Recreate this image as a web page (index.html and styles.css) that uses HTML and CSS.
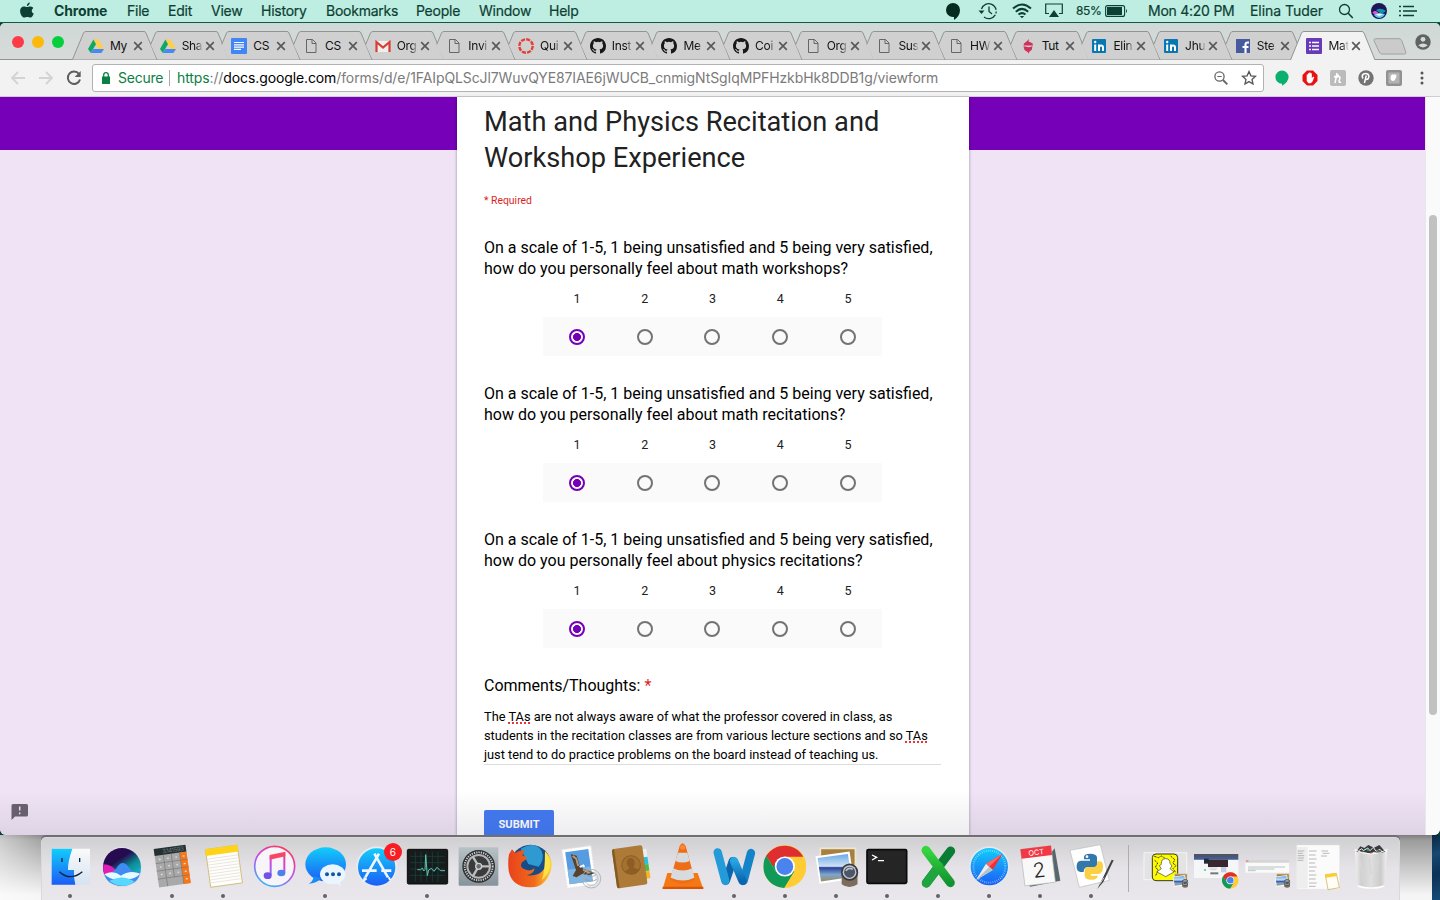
FILE: index.html
```html
<!DOCTYPE html>
<html lang="en">
<head>
<meta charset="utf-8">
<title>Math and Physics Recitation and Workshop Experience</title>
<link rel="stylesheet" href="styles.css">
</head>
<body>
<svg class="defs" width="0" height="0">
  <defs>
    <linearGradient id="blue" x1="0" y1="0" x2="0" y2="1"><stop offset="0" stop-color="#12cdfb"/><stop offset="1" stop-color="#1c5df5"/></linearGradient>
    <linearGradient id="pale" x1="0" y1="0" x2="0" y2="1"><stop offset="0" stop-color="#fafafa"/><stop offset="1" stop-color="#d6e3f2"/></linearGradient>
    <linearGradient id="tunes" gradientUnits="userSpaceOnUse" x1="110" y1="28" x2="50" y2="148"><stop offset="0" stop-color="#fb3b5c"/><stop offset=".5" stop-color="#c44be8"/><stop offset="1" stop-color="#30b8fa"/></linearGradient>
    <linearGradient id="steel" x1="0" y1="0" x2="0" y2="1"><stop offset="0" stop-color="#b7c2c7"/><stop offset="1" stop-color="#87939a"/></linearGradient>
    <linearGradient id="fox" x1="0" y1="0" x2="1" y2="0"><stop offset="0" stop-color="#e8421c"/><stop offset=".6" stop-color="#f26a1b"/><stop offset="1" stop-color="#fdd53b"/></linearGradient>
    <linearGradient id="word" x1="0" y1="0" x2="0" y2="1"><stop offset="0" stop-color="#27a4e2"/><stop offset="1" stop-color="#0a64ae"/></linearGradient>
    <linearGradient id="excel" x1="0" y1="0" x2="0" y2="1"><stop offset="0" stop-color="#35d540"/><stop offset="1" stop-color="#12932f"/></linearGradient>
    <linearGradient id="sea" x1="0" y1="0" x2="0" y2="1"><stop offset="0" stop-color="#6aa8e8"/><stop offset=".45" stop-color="#cfe2f3"/><stop offset=".5" stop-color="#2b3f9a"/><stop offset=".75" stop-color="#7aa7cf"/><stop offset="1" stop-color="#a08a60"/></linearGradient>
    <linearGradient id="siribg" x1="0" y1="0" x2=".7" y2="1"><stop offset="0" stop-color="#2b0750"/><stop offset=".4" stop-color="#240c50"/><stop offset=".65" stop-color="#0c8d94"/><stop offset="1" stop-color="#1fc0e0"/></linearGradient>
    <linearGradient id="bin" x1="0" y1="0" x2="1" y2="0"><stop offset="0" stop-color="#f3f3f3"/><stop offset=".2" stop-color="#cfcfcf"/><stop offset=".5" stop-color="#dfdfdf"/><stop offset=".8" stop-color="#cbcbcb"/><stop offset="1" stop-color="#f3f3f3"/></linearGradient>
    <symbol id="close" viewBox="0 0 10 10"><path d="M1.2 1.2l7.6 7.6M8.8 1.2L1.2 8.8" stroke="#5a5a5a" stroke-width="1.7" fill="none"/></symbol>
    <symbol id="tab" viewBox="0 0 86 29"><path d="M6.7 13.5L12 2Q12.600 .5 14 .5H72Q73.400 .5 74 2L85 28.500H13.500Z" fill="#d0d0d0"/><path d="M6.700 13.500L11.500 2Q12.200 .5 14 .5H72Q73.400 .5 74 2L85 28.500" fill="none" stroke="#929494"/></symbol>
    <symbol id="tabfirst" viewBox="0 0 86 29"><path d="M.5 28.500L11.500 2Q12.200 .5 14 .5H72Q73.400 .5 74 2L85 28.500" fill="#d0d0d0" stroke="#929494"/></symbol>
    <symbol id="tabactive" viewBox="0 0 86 29"><path d="M.5 29L11.500 2Q12.200 .5 14 .5H72Q73.400 .5 74 2L85 29" fill="#f2f2f2" stroke="#929494"/></symbol>
    <symbol id="drive" viewBox="0 0 16 16"><path d="M5.400 1.500h5.200L16 11h-5.400z" fill="#ffcf48"/><path d="M5.400 1.500L8 6.200 2.800 15 0 11z" fill="#11a861"/><path d="M5.400 11H16l-2.600 4H2.800z" fill="#4688f4"/></symbol>
    <symbol id="doc" viewBox="0 0 16 16"><rect width="16" height="16" rx="1" fill="#4285f4"/><path d="M3 4.500h10M3 6.800h10M3 9.100h10M3 11.400h7" stroke="#fff" stroke-width="1.200"/></symbol>
    <symbol id="page" viewBox="0 0 16 16"><path d="M3.500 1.500h6l3.500 3.500v9.500h-9.500zM9 1.500v4h4" fill="none" stroke="#666"/></symbol>
    <symbol id="mail" viewBox="0 0 16 16"><path d="M1 3h14v11H1z" fill="#eee"/><path d="M1.500 14V4L8 9.500 14.500 4v10" fill="none" stroke="#d93c32" stroke-width="2.200"/></symbol>
    <symbol id="canvas" viewBox="0 0 16 16"><circle cx="8" cy="8" r="6.700" fill="none" stroke="#e23f35" stroke-width="2.400" stroke-dasharray="4.100 1.160"/></symbol>
    <symbol id="github" viewBox="0 0 16 16"><path fill="#191717" d="M8 0C3.580 0 0 3.580 0 8c0 3.540 2.290 6.530 5.470 7.590.4.070.55-.17.55-.38 0-.19-.01-.82-.01-1.490-2.010.37-2.530-.49-2.690-.94-.09-.23-.48-.94-.82-1.130-.28-.15-.68-.52-.01-.53.63-.01 1.080.58 1.230.82.72 1.210 1.870.87 2.330.66.070-.52.28-.87.51-1.070-1.780-.2-3.640-.89-3.640-3.950 0-.87.31-1.590.82-2.150-.08-.2-.36-1.020.08-2.120 0 0 .67-.21 2.200.82a7.600 7.600 0 0 1 4 0c1.530-1.040 2.200-.82 2.200-.82.44 1.100.16 1.920.08 2.120.51.56.82 1.270.82 2.150 0 3.070-1.870 3.750-3.650 3.950.29.25.54.73.54 1.480 0 1.070-.01 1.930-.01 2.200 0 .21.15.46.55.38A8 8 0 0 0 16 8c0-4.420-3.580-8-8-8z"/></symbol>
    <symbol id="acorn" viewBox="0 0 16 16"><path d="M6.500 3.500L9 1l-.5 2.500 4 1.700.5 2.300H3.500L4 5.500zM3.500 8.300L9 9.200l3.500-1-.7 3.500-2.500 2L9 15.500 7.500 14 4.500 12z" fill="#cf315b"/></symbol>
    <symbol id="linkedin" viewBox="0 0 16 16"><rect x="1" y="1" width="14" height="14" rx="1" fill="#0976b4"/><path d="M4.200 6.500V13M8 13V6.500M8 9.500q0-2 2-2t2 2V13" stroke="#fff" stroke-width="2" fill="none"/><circle cx="4.200" cy="4" r="1.200" fill="#fff"/></symbol>
    <symbol id="facebook" viewBox="0 0 16 16"><rect x="1" y="1" width="14" height="14" rx=".5" fill="#465b9e"/><path d="M10.500 15V6.500q0-2 2-2H14M7.500 9h6" stroke="#fff" stroke-width="2.100" fill="none"/></symbol>
    <symbol id="forms" viewBox="0 0 16 16"><rect width="16" height="16" rx="1" fill="#673ab7"/><path d="M6 4.500h7M6 8h7M6 11.500h7M3 4.500h2M3 8h2M3 11.500h2" stroke="#fff" stroke-width="1.700"/></symbol>
    <symbol id="chrome" viewBox="0 0 128 128"><circle cx="64" cy="64" r="64" fill="#fc3"/><path d="M9 31A64 64 0 0 0 62 128L92 79 64 64 36 80Z" fill="#119957"/><path d="M9 31L36 80 64 64V32Z" fill="#119957"/><path d="M9 32A64 64 0 0 1 119 35H64Q44 36 36 54L30 64Z" fill="#e02d2f"/><circle cx="64" cy="64" r="30" fill="#fff"/><circle cx="64" cy="64" r="25" fill="#4a82ee"/></symbol>
    <symbol id="preview" viewBox="0 0 130 120"><path d="M18 4h102v80H18z" fill="#a7803f" stroke="#efe6d0" stroke-width="5"/><path d="M4 27L103 13l12 80-99 14z" fill="#fff"/><path d="M10 32l88-12 10 67-88 13z" fill="url(#sea)"/><path d="M80 78v30q22 16 46 0V78z" fill="#7c6c5d"/><circle cx="103" cy="73" r="25" fill="#393b40"/><circle cx="103" cy="73" r="20" fill="#c2c8ce"/><circle cx="103" cy="73" r="16" fill="#4c5666"/><path d="M92 69q9-12 20-4" stroke="#bac6d7" stroke-width="5" fill="none"/></symbol>
  </defs>
</svg>

<div class="screen">
  <header class="menubar">
    <svg class="apple" width="14" height="17" viewBox="0 0 14 17"><path d="M9.700.3Q10 3 6.900 4.200 6.700 1.500 9.700.3zM7 5.100c1.500 0 2-.8 3.600-.7 1.300.1 2.200.7 2.800 1.500-2.400 1.500-2 4.700.4 5.700-.7 2-1.900 4-3.300 4-1.200 0-1.700-.7-3.200-.7s-2 .7-3.100.7C2.300 15.600.1 12 .1 9c0-3 1.800-4.600 3.800-4.600C5.200 4.400 6 5.100 7 5.100z" fill="#0d3f34"/></svg>
    <nav class="menus"><b>Chrome</b><span>File</span><span>Edit</span><span>View</span><span>History</span><span>Bookmarks</span><span>People</span><span>Window</span><span>Help</span></nav>
    <div class="status">
      <svg width="16" height="18" viewBox="0 0 16 18"><path d="M8 1a7 7 0 1 0 0 14h1v3q6-4 6-10a7 7 0 0 0-7-7z" fill="#062c22"/></svg>
      <svg width="20" height="18" viewBox="0 0 20 18"><path d="M3.500 7A7.500 7.500 0 1 1 6 15" fill="none" stroke="#0d4034" stroke-width="1.300" stroke-dasharray="20 1.500 2 1.500"/><path d="M.5 8.500h6L3.500 12z" fill="#0d4034"/><path d="M11 4.500V9.500l3 2.500" fill="none" stroke="#0d4034" stroke-width="1.300"/></svg>
      <svg width="20" height="16" viewBox="0 0 20 16"><path d="M1 5.500q9-8 18 0M3.800 8.700q6.200-5.600 12.400 0M6.500 11.600q3.500-3 7 0" fill="none" stroke="#0d4034" stroke-width="2"/><path d="M7.800 12.900h4.400L10 15.300z" fill="#0d4034"/></svg>
      <svg width="18" height="15" viewBox="0 0 18 15"><path d="M4 10.500H.7V1h16.600v9.500H14" fill="none" stroke="#0d4034" stroke-width="1.200"/><path d="M9 7l5 7H4z" fill="#0d4034"/></svg>
      <span class="percent">85%</span>
      <svg width="23" height="12" viewBox="0 0 23 12"><rect x=".6" y=".6" width="19" height="10.800" rx="2" fill="none" stroke="#0d4034" stroke-width="1.100"/><rect x="2" y="2" width="15" height="8" fill="#0d4034"/><path d="M21 4q2 2 0 4z" fill="#0d4034"/></svg>
      <span class="clock">Mon 4:20 PM</span><span class="user">Elina Tuder</span>
      <svg width="16" height="16" viewBox="0 0 16 16"><circle cx="6.500" cy="6.500" r="5" fill="none" stroke="#0d4034" stroke-width="1.300"/><path d="M10.200 10.200l4.600 4.800" stroke="#0d4034" stroke-width="1.600"/></svg>
      <svg width="16" height="16" viewBox="0 0 16 16"><circle cx="8" cy="8" r="8" fill="#1e1458"/><path d="M5 7q5-3 10 1-3 3-6 2z" fill="#1590a8"/><path d="M1.500 9.500q3-3 6 .5l-3 3z" fill="#d856d9"/><path d="M3 12q4-3 11-1-2 4-6 4-3 0-5-3z" fill="#5ecdf2"/><path d="M5 11.500q3-2 7 0l-4 1.500z" fill="#e6fbff"/></svg>
      <svg width="19" height="12" viewBox="0 0 19 12"><path d="M4 1.500h11M4 6h14M4 10.500h11M0 1.500h2M0 6h2M0 10.500h2" stroke="#0d4034" stroke-width="1.700"/></svg>
    </div>
  </header>

  <main class="window">
    <div class="tabstrip">
      <div class="lights"><i class="red"></i><i class="amber"></i><i class="green"></i></div>
      <div class="tabs">
        <div class="tab"><svg class="shape"><use href="#tabfirst"/></svg><svg class="fav"><use href="#drive"/></svg><span>My</span><svg class="x"><use href="#close"/></svg></div>
        <div class="tab"><svg class="shape"><use href="#tab"/></svg><svg class="fav"><use href="#drive"/></svg><span>Sha</span><svg class="x"><use href="#close"/></svg></div>
        <div class="tab"><svg class="shape"><use href="#tab"/></svg><svg class="fav"><use href="#doc"/></svg><span>CS</span><svg class="x"><use href="#close"/></svg></div>
        <div class="tab"><svg class="shape"><use href="#tab"/></svg><svg class="fav"><use href="#page"/></svg><span>CS</span><svg class="x"><use href="#close"/></svg></div>
        <div class="tab"><svg class="shape"><use href="#tab"/></svg><svg class="fav"><use href="#mail"/></svg><span>Org</span><svg class="x"><use href="#close"/></svg></div>
        <div class="tab"><svg class="shape"><use href="#tab"/></svg><svg class="fav"><use href="#page"/></svg><span>Invi</span><svg class="x"><use href="#close"/></svg></div>
        <div class="tab"><svg class="shape"><use href="#tab"/></svg><svg class="fav"><use href="#canvas"/></svg><span>Qui</span><svg class="x"><use href="#close"/></svg></div>
        <div class="tab"><svg class="shape"><use href="#tab"/></svg><svg class="fav"><use href="#github"/></svg><span>Inst</span><svg class="x"><use href="#close"/></svg></div>
        <div class="tab"><svg class="shape"><use href="#tab"/></svg><svg class="fav"><use href="#github"/></svg><span>Me</span><svg class="x"><use href="#close"/></svg></div>
        <div class="tab"><svg class="shape"><use href="#tab"/></svg><svg class="fav"><use href="#github"/></svg><span>Coi</span><svg class="x"><use href="#close"/></svg></div>
        <div class="tab"><svg class="shape"><use href="#tab"/></svg><svg class="fav"><use href="#page"/></svg><span>Org</span><svg class="x"><use href="#close"/></svg></div>
        <div class="tab"><svg class="shape"><use href="#tab"/></svg><svg class="fav"><use href="#page"/></svg><span>Sus</span><svg class="x"><use href="#close"/></svg></div>
        <div class="tab"><svg class="shape"><use href="#tab"/></svg><svg class="fav"><use href="#page"/></svg><span>HW</span><svg class="x"><use href="#close"/></svg></div>
        <div class="tab"><svg class="shape"><use href="#tab"/></svg><svg class="fav"><use href="#acorn"/></svg><span>Tut</span><svg class="x"><use href="#close"/></svg></div>
        <div class="tab"><svg class="shape"><use href="#tab"/></svg><svg class="fav"><use href="#linkedin"/></svg><span>Elin</span><svg class="x"><use href="#close"/></svg></div>
        <div class="tab"><svg class="shape"><use href="#tab"/></svg><svg class="fav"><use href="#linkedin"/></svg><span>Jhu</span><svg class="x"><use href="#close"/></svg></div>
        <div class="tab"><svg class="shape"><use href="#tab"/></svg><svg class="fav"><use href="#facebook"/></svg><span>Ste</span><svg class="x"><use href="#close"/></svg></div>
        <div class="tab"><svg class="shape"><use href="#tabactive"/></svg><svg class="fav"><use href="#forms"/></svg><span>Mat</span><svg class="x"><use href="#close"/></svg></div>
      </div>
      <svg class="newtab" width="34" height="17" viewBox="0 0 34 17"><path d="M2.500.7h23.500q2 0 2.800 2l4 11.500q.5 1.800-1.300 1.800H9q-2 0-2.800-2L1 2.500Q.6.7 2.500.7z" fill="#cbcbcb" stroke="#a0a2a2"/></svg>
      <svg class="profile" width="16" height="16" viewBox="0 0 16 16"><circle cx="8" cy="8" r="7.700" fill="#5f6363"/><circle cx="8" cy="5.300" r="2.400" fill="#d4dbd9"/><path d="M3.200 11.300q4.800-3.500 9.600 0Q8 15.500 3.200 11.300z" fill="#d4dbd9"/></svg>
    </div>

    <div class="toolbar">
      <svg width="16" height="14" viewBox="0 0 16 14"><path d="M15 7H2M8 1L2 7l6 6" fill="none" stroke="#d3d3d3" stroke-width="1.800"/></svg>
      <svg width="16" height="14" viewBox="0 0 16 14"><path d="M1 7h13M8 1l6 6-6 6" fill="none" stroke="#d3d3d3" stroke-width="1.800"/></svg>
      <svg width="16" height="16" viewBox="0 0 16 16"><path d="M13 4A6.200 6.200 0 1 0 14 9.500" fill="none" stroke="#5f5f5f" stroke-width="2"/><path d="M14.700 1v6H8.700z" fill="#5f5f5f"/></svg>
      <div class="omnibox">
        <svg width="8" height="12" viewBox="0 0 8 12"><path d="M0 4.500h8V12H0z" fill="#0b8043"/><path d="M1.700 5V3a2.300 2.300 0 0 1 4.600 0v2" fill="none" stroke="#0b8043" stroke-width="1.300"/></svg>
        <span class="secure">Secure</span><span class="bar"></span>
        <span class="url"><em>https</em>://<b>docs.google.com</b>/forms/d/e/1FAIpQLScJl7WuvQYE87IAE6jWUCB_cnmigNtSgIqMPFHzkbHk8DDB1g/viewform</span>
        <svg class="lens" width="14" height="14" viewBox="0 0 14 14"><circle cx="5.500" cy="5.500" r="4.600" fill="none" stroke="#666" stroke-width="1.300"/><path d="M9 9l4.300 4.300" stroke="#666" stroke-width="1.900"/><path d="M3.300 5.500h4.400" stroke="#666"/></svg>
        <svg width="16" height="16" viewBox="0 0 16 16"><path d="M8 1.500l1.900 4.300 4.600.5-3.500 3.100 1 4.600-4-2.400L4 14l1-4.600L1.500 6.300l4.600-.5z" fill="none" stroke="#555" stroke-width="1.300"/></svg>
      </div>
      <div class="extensions">
        <svg width="16" height="16" viewBox="0 0 16 16"><path d="M8 .5a6.600 6.600 0 0 0 0 13.200v2Q14.600 12 14.600 7A6.600 6.600 0 0 0 8 .5z" fill="#0ab06d"/></svg>
        <svg width="16" height="16" viewBox="0 0 16 16"><path d="M5 .5h6L15.500 5v6L11 15.500H5L.5 11V5z" fill="#ea1111"/><path d="M4.700 9V4.500h1.200V3.300h1.300V2.500h1.300v.8h1.300v5l1.400-1.800 1 .7-1.800 4.500-1.700 1.600H6.500L4.700 11z" fill="#fff"/></svg>
        <svg width="16" height="16" viewBox="0 0 16 16"><rect width="16" height="16" rx="2" fill="#bbb"/><path d="M5 13L7 3M6 8q4-3 4 0l-1 3q0 2 2 1M4 7l5-2" stroke="#fff" stroke-width="1.500" fill="none"/></svg>
        <svg width="16" height="16" viewBox="0 0 16 16"><circle cx="8" cy="8" r="7.700" fill="#737373"/><path d="M5 8.500C2.500 4.500 7 2.500 9.500 4s1.200 6-1.500 5.500M8.300 5.500L6.400 13" fill="none" stroke="#fff" stroke-width="1.500"/></svg>
        <svg width="16" height="16" viewBox="0 0 16 16"><rect width="16" height="16" rx="2" fill="#929292"/><rect x="2.500" y="2.500" width="11" height="11" fill="#b4b4b4"/><path d="M6 4.500h3.500q1.500 0 .7 2.700T7.500 11q-3 0-3-3T6 4.500z" fill="#fff"/></svg>
        <svg class="dots" width="4" height="14" viewBox="0 0 4 14"><circle cx="2" cy="2" r="1.500" fill="#555"/><circle cx="2" cy="7" r="1.500" fill="#555"/><circle cx="2" cy="12" r="1.500" fill="#555"/></svg>
      </div>
    </div>

    <div class="viewport">
      <div class="page">
        <div class="feedback"><svg width="17" height="16" viewBox="0 0 17 16"><path d="M2 0h13.500q1.500 0 1.500 1.500V11q0 1.500-1.500 1.500H4L.5 16V1.500Q.5 0 2 0z" fill="#6a6270"/><path d="M8.700 2.500v4M8.700 8.500v1.800" stroke="#efe3f5" stroke-width="1.500"/></svg></div>
        <section class="card">
          <h1>Math and Physics Recitation and<br>Workshop Experience</h1>
          <p class="required">* Required</p>
          <div class="question">
            <h2>On a scale of 1-5, 1 being unsatisfied and 5 being very satisfied,<br>how do you personally feel about math workshops?</h2>
            <div class="numbers"><span>1</span><span>2</span><span>3</span><span>4</span><span>5</span></div>
            <div class="radios"><i class="on"></i><i></i><i></i><i></i><i></i></div>
          </div>
          <div class="question">
            <h2>On a scale of 1-5, 1 being unsatisfied and 5 being very satisfied,<br>how do you personally feel about math recitations?</h2>
            <div class="numbers"><span>1</span><span>2</span><span>3</span><span>4</span><span>5</span></div>
            <div class="radios"><i class="on"></i><i></i><i></i><i></i><i></i></div>
          </div>
          <div class="question">
            <h2>On a scale of 1-5, 1 being unsatisfied and 5 being very satisfied,<br>how do you personally feel about physics recitations?</h2>
            <div class="numbers"><span>1</span><span>2</span><span>3</span><span>4</span><span>5</span></div>
            <div class="radios"><i class="on"></i><i></i><i></i><i></i><i></i></div>
          </div>
          <h2>Comments/Thoughts: <span class="star">*</span></h2>
          <p class="answer">The <u>TAs</u> are not always aware of what the professor covered in class, as<br>students in the recitation classes are from various lecture sections and so <u>TAs</u><br>just tend to do practice problems on the board instead of teaching us.</p>
          <button class="submit">SUBMIT</button>
        </section>
      </div>
      <div class="scrollbar"><div class="thumb"></div></div>
    </div>
  </main>

  <footer class="desktop">
    <div class="dock">
      <div class="app run"><svg viewBox="0 0 153 189"><path d="M20 35h115v108H20z" fill="url(#pale)"/><path d="M20 35h62Q68 75 69 99h18q-2 22 4 44H20z" fill="url(#blue)"/><path d="M51 63v12M104 63v12M43 104q33 30 69 0" fill="none" stroke="#13223c" stroke-width="4"/></svg></div>
      <div class="app"><svg viewBox="0 0 153 189"><circle cx="78" cy="90" r="61" fill="#dedfe4"/><circle cx="78" cy="90" r="57" fill="url(#siribg)"/><path d="M22 82q28 0 46 28l-44 2q-4-16-2-30z" fill="#e020b4"/><path d="M60 96q18-32 38-6t36 12q-3 22-18 34-40 22-76 0-10-9-15-22 18-2 35-18z" fill="#3f8cf2"/><path d="M25 112q26-14 50 4 26-18 58-6-24 24-56 12-26 14-52-10z" fill="#e6fbff"/><path d="M40 132q36-22 76 2-36 26-76-2z" fill="#58d8ff"/></svg></div>
      <div class="app run"><svg viewBox="0 0 153 189"><g transform="rotate(-8 76 89)"><path d="M28 30h96v115H28z" fill="#a9a9a9"/><path d="M28 29h96v21H28z" fill="#243032"/><path d="M103 51h21v94h-21z" fill="#fb7513"/><path d="M28 73h96M28 96h96M28 120h96M54 51v94M78 51v70M103 51v94" stroke="#777" stroke-width="2"/><text x="52" y="46" font-size="18" textLength="66" fill="#6f7c7e" font-family="Inter">3.141593</text><path d="M39 62h5M64 62h5M89 62h5M39 85h5M64 85h5M89 85h5M39 108h5M64 108h5M89 108h5M111 62h6M111 85h6M111 108h6M111 131h6" stroke="#dedede" stroke-width="4"/></g></svg></div>
      <div class="app run"><svg viewBox="0 0 153 189"><g transform="rotate(-8 76 89)"><path d="M30 31h96v114H30z" fill="#fffefa" stroke="#c5a84b" stroke-width="2"/><path d="M29 30h98v20H29z" fill="#ffd31a"/><path d="M31 60h94M31 69h94M31 78h94M31 87h94M31 96h94M31 105h94M31 114h94M31 123h94M31 132h94" stroke="#dddbd7" stroke-width="2"/></g></svg></div>
      <div class="app"><svg viewBox="0 0 153 189"><circle cx="77" cy="88" r="60" fill="#f7f4fa" stroke="url(#tunes)" stroke-width="5"/><path d="M65 115V59l41-9v57" fill="none" stroke="url(#tunes)" stroke-width="6"/><path d="M62 54l47-10v14l-47 10z" fill="#f64768"/><ellipse cx="56" cy="116" rx="12" ry="10" fill="#7451e6"/><ellipse cx="97" cy="108" rx="12" ry="10" fill="#4d82eb"/></svg></div>
      <div class="app run"><svg viewBox="0 0 153 189"><ellipse cx="77" cy="82" rx="61" ry="51" fill="url(#blue)"/><path d="M41 117q-2 18-15 23 23 0 37-16z" fill="#168df6"/><ellipse cx="98" cy="112" rx="38" ry="30" fill="#eaf6ff"/><path d="M107 135l15 13-4-23z" fill="#eaf6ff"/><circle cx="81" cy="112" r="6" fill="#1456a6"/><circle cx="99" cy="112" r="6" fill="#1456a6"/><circle cx="117" cy="112" r="6" fill="#1456a6"/></svg></div>
      <div class="app"><svg viewBox="0 0 153 189"><circle cx="77" cy="90" r="62" fill="#e7eaf0"/><circle cx="77" cy="90" r="56" fill="url(#blue)"/><path d="M70 50l41 71M84 50l-41 71M33 101h44M91 101h30" stroke="#edf6ff" stroke-width="8"/><path d="M41 121l-2 9 8-6M113 121l5 9" stroke="#edf6ff" stroke-width="6" fill="none"/></svg><span class="badge">6</span></div>
      <div class="app run"><svg viewBox="0 0 153 189"><rect x="16" y="37" width="121" height="104" rx="4" fill="#171b1c" stroke="#08090a" stroke-width="3"/><path d="M25 58h103M25 77h103M25 96h103M25 115h103M40 44v90M57 44v90M74 44v90M91 44v90M108 44v90" stroke="#174a43" stroke-width="2"/><path d="M46 98h10l5-5 4 9 4-4 2-45 5 63 4-17 8-5 8 9 9-12 10 10h14" fill="none" stroke="#5cc8b2" stroke-width="3"/></svg></div>
      <div class="app"><svg viewBox="0 0 153 189"><rect x="17" y="31" width="119" height="115" rx="3" fill="url(#steel)"/><circle cx="77" cy="88" r="49" fill="#2b2d2f"/><circle cx="77" cy="88" r="42" fill="#292b2d" stroke="#c8cacb" stroke-width="6" stroke-dasharray="4 3"/><circle cx="77" cy="88" r="34" fill="#393b3c" stroke="#b3b5b6" stroke-width="6"/><path d="M77 88h35M77 88L59 58M77 88l-18 31" stroke="#bcbebf" stroke-width="7"/><circle cx="77" cy="88" r="9" fill="#6a6c6e" stroke="#ced0d1" stroke-width="4"/></svg></div>
      <div class="app"><svg viewBox="0 0 153 189"><circle cx="80" cy="84" r="61" fill="#174c87"/><path d="M50 36q43-26 63 6 10 24-9 47l-31-8z" fill="#2f9ad2"/><path d="M15 52l9-15 10 11q16-11 28-7l-7 14 16 8-17 13q-9 14 8 21 17 8 30-3-2 16-24 21 37 4 52-19 14-26 3-53 29 25 16 62-18 48-61 46-55-2-64-50-3-27 1-49z" fill="url(#fox)"/><path d="M123 43q36 45-9 86 9-22 9-86z" fill="#ffe447"/></svg></div>
      <div class="app"><svg viewBox="0 0 153 189"><g transform="rotate(-8 76 89)"><path d="M28 31h88v117H28z" fill="#fff" stroke="#e5e5e5" stroke-width="4" stroke-dasharray="5 4"/><path d="M37 40h70v97H37z" fill="#579ce1"/><path d="M37 93h70v44H37z" fill="#80b4e3"/></g><path d="M47 52l18 4 10 34 12 6 33 12-17 7-22-4-16 10-12-4 10-18z" fill="#59412b"/><path d="M53 57l10 8 7 22M84 98l20 10" stroke="#b39a78" stroke-width="6"/><path d="M74 90l11-5 3 5" fill="none" stroke="#fff" stroke-width="5"/><circle cx="109" cy="125" r="28" fill="none" stroke="#a3adb5" stroke-width="2.500"/><circle cx="109" cy="125" r="20" fill="none" stroke="#a3adb4" stroke-width="2"/><path d="M93 112q19 12 31 0M92 127q17 12 33 0" stroke="#8a939b" stroke-width="2" fill="none"/></svg></div>
      <div class="app"><svg viewBox="0 0 153 189"><g transform="rotate(-8 76 89)"><path d="M115 42h13v26h-13z" fill="#eee"/><path d="M115 66h13v23h-13z" fill="#2bbfe1"/><path d="M115 88h13v20h-13z" fill="#50ba48"/><path d="M115 109h13v22h-13z" fill="#f3b628"/><rect x="25" y="29" width="92" height="119" rx="6" fill="#ad7a38"/><path d="M25 35q0-6 7-6v119q-7 0-7-6z" fill="#835822"/><circle cx="76" cy="84" r="28" fill="#a4712f" stroke="#8d5d25" stroke-width="3"/><path d="M64 81q0-18 12-18t12 18q-3 7-6 10 3 6 17 9-20 23-46 0 14-3 17-9-5-4-6-10z" fill="#8d5d25"/></g></svg></div>
      <div class="app"><svg viewBox="0 0 153 189"><path d="M31 108h91l17 48H17z" fill="#f47914"/><path d="M17 149h122v7H17z" fill="#dc5305"/><path d="M40 127L68 27q8-17 18 0l27 100q-37 27-73 0z" fill="#ed6d18"/><path d="M63 47h28l7 25q-21 9-43 0zM48 94q29 13 58 0l6 28q-33 17-71 0z" fill="#d8dbdd"/><path d="M69 30q8-14 16 0l-1 5q-7 5-14 0z" fill="#ff862d"/></svg></div>
      <div class="app run"><svg viewBox="0 0 153 189"><path d="M129 48L107 131" stroke="#1583c9" stroke-width="25" stroke-linecap="round"/><path d="M74 72l-20 59" stroke="#0a64ae" stroke-width="24" stroke-linecap="round"/><path d="M78 72l26 60" stroke="url(#word)" stroke-width="25" stroke-linecap="round"/><path d="M29 46l23 86" stroke="#239bd8" stroke-width="25" stroke-linecap="round"/></svg></div>
      <div class="app run"><svg viewBox="0 0 153 189"><use href="#chrome" x="13" y="24" width="129" height="129"/></svg></div>
      <div class="app run"><svg viewBox="0 0 153 189"><use href="#preview" x="12" y="30" width="135" height="124"/></svg></div>
      <div class="app run"><svg viewBox="0 0 153 189"><rect x="18" y="38" width="119" height="101" rx="4" fill="#252525" stroke="#090b0d" stroke-width="5"/><path d="M33 54l14 7-14 8M51 71h18" fill="none" stroke="#fff" stroke-width="4"/></svg></div>
      <div class="app run"><svg viewBox="0 0 153 189"><path d="M116 42L43 138" stroke="#0b7c34" stroke-width="27" stroke-linecap="round"/><path d="M43 138l38-51" stroke="#20a440" stroke-width="27" stroke-linecap="round"/><path d="M42 40l73 97" stroke="url(#excel)" stroke-width="27" stroke-linecap="round"/></svg></div>
      <div class="app run"><svg viewBox="0 0 153 189"><circle cx="79" cy="89" r="61" fill="#e5e9ee"/><circle cx="79" cy="89" r="56" fill="url(#blue)"/><circle cx="79" cy="89" r="48" fill="none" stroke="#bcecff" stroke-width="6" stroke-dasharray="1.500 4.800"/><path d="M119 50L89 99 69 80z" fill="#f22e36"/><path d="M39 129l30-49 20 19z" fill="#eee"/><path d="M69 80l10 9 40-39z" fill="#ff6963"/><path d="M39 129l40-40 10 10z" fill="#b8c2cb"/></svg></div>
      <div class="app run"><svg viewBox="0 0 153 189"><path d="M122 34l17 97-90 18-10-8z" fill="#58666b"/><g transform="rotate(-7 76 88)"><path d="M26 31h92v110H26z" fill="#f8f8f8" stroke="#b5b7b9" stroke-width="2"/><path d="M26 30h92v29H26z" fill="#f13844"/><text x="48" y="53" font-size="22" fill="#fff" font-family="Inter">OCT</text><text x="55" y="121" font-size="61" font-weight="300" fill="#222" font-family="Inter">2</text></g></svg></div>
      <div class="app run"><svg viewBox="0 0 153 189"><path d="M15 40l91-17 27 107-90 21z" fill="#fff" stroke="#bbb" stroke-width="2"/><path d="M57 61q-1-10 18-11 20 0 21 11v22q0 8-11 8H68q-12 0-12 14H46q-13-2-11-20 1-14 14-14h26v-4H57z" fill="#3378ad"/><path d="M97 73h7q11 0 10 18-1 20-14 20H78v5h20q0 11-17 12-21 1-22-12V99q0-9 12-9h16q10 0 10-17z" fill="#fbd044"/><circle cx="66" cy="59" r="4" fill="#fff"/><path d="M140 68L109 132l-12 24 18-21 31-65z" fill="#414447"/><path d="M117 122l-13 20" stroke="#bbc2c8" stroke-width="3"/></svg></div>
      <div class="separator"></div>
      <div class="minimized">
        <svg viewBox="0 0 153 189"><path d="M9 47h128v81H9z" fill="#e3e2e4" stroke="#fff" stroke-width="2"/><rect x="34" y="51" width="76" height="80" rx="11" fill="#fffc00" stroke="#38382b" stroke-width="3"/><path d="M40 58l12 4 9-5 10 6M89 57l13 12-7 9 10 8-9 9 9 13M41 70l9 8-7 13 9 8-8 17" fill="none" stroke="#34341a" stroke-width="3" stroke-dasharray="7 3"/><path d="M61 79q0-14 13-14t13 14l6 8-6 8 12 10-11 6-14 8-14-8-13-6 14-10-6-9 6-4z" fill="#fff" stroke="#3c3c31" stroke-width="2"/><use href="#preview" x="93" y="109" width="50" height="45"/></svg>
        <svg viewBox="0 0 153 189"><path d="M6 51h133v72H6z" fill="#f5f6f8"/><path d="M6 51h133v9H6z" fill="#4d5563"/><path d="M6 60h133v8H6z" fill="#425a98"/><path d="M48 68h60v22H48z" fill="#3a262d"/><path d="M36 65h14v15H36z" fill="#1e2c38"/><path d="M55 109h24" stroke="#777" stroke-width="6"/><path d="M50 93h26M55 98h18" stroke="#bbc" stroke-width="2"/><path d="M36 99h6" stroke="#4ad06e" stroke-width="4"/><path d="M87 90h16v16H87z" fill="#c4cee3"/><use href="#chrome" x="90" y="105" width="50" height="50"/></svg>
        <svg viewBox="0 0 153 189"><path d="M7 69h131v38H7z" fill="#f9faf9"/><path d="M7 69h131v8H7z" fill="#d4d5d5"/><path d="M15 90h111M15 96h79M15 101h23" stroke="#93aea6" stroke-width="2"/><path d="M9 72h7" stroke="#f45a54" stroke-width="3"/><use href="#preview" x="93" y="109" width="50" height="45"/></svg>
        <svg viewBox="0 0 153 189"><path d="M8 24h129v133H8z" fill="#fbfbfb" stroke="#ddd"/><path d="M9 30h32v124H9z" fill="#eee"/><path d="M11 42h20M11 49h16M11 56h20M11 63h19M11 70h17M45 42h23M45 54h20M45 66h23M45 78h18M45 90h23M45 102h18M45 114h22M45 126h20M45 138h23M45 148h20M82 42h20M86 49h20M81 57h18" stroke="#999" stroke-width="2"/><path d="M94 113l33-4 9 43-34 6z" fill="#fffdf4" stroke="#c2a747" stroke-width="2"/><path d="M94 113l33-4 2 8-33 5z" fill="#ffd023"/></svg>
        <svg viewBox="0 0 153 189"><path d="M29 36h98l-9 111q-40 12-80 0z" fill="url(#bin)"/><path d="M34 44l12-16 12 5 12-9 17 8 16-8 18 20-18 5-16-5-15 5-18-5z" fill="#373b3e"/><path d="M41 41l9-6 5 6 13-8 7 8 10-10 8 12 12-6 7 8" fill="none" stroke="#eee" stroke-width="3"/><path d="M64 36l7 5M93 47l13-7" stroke="#2a9d79" stroke-width="4"/><path d="M97 38l6 5M75 49l8-3" stroke="#b4362d" stroke-width="4"/><path d="M29 38q48 26 98 0" fill="none" stroke="#f7f7f7" stroke-width="3"/><path d="M46 70l10 66M99 66l-12 70M72 62l6 50" fill="none" stroke="#d6d6d6" stroke-width="5"/><path d="M38 147q40 13 80 0" fill="none" stroke="#fff" stroke-width="4"/></svg>
      </div>
    </div>
    <div class="wallpaper"></div>
  </footer>
</div>
</body>
</html>
```

FILE: styles.css
```css
* { box-sizing: border-box; }
body { margin: 0; background: #073d33; font-family: Inter, "Liberation Sans", sans-serif; }
svg { display: block; flex: none; }
.defs { position: absolute; }
.screen { width: 1440px; height: 900px; overflow: hidden; display: flex; flex-direction: column; }

.menubar { height: 23px; flex: none; display: flex; align-items: center; padding: 0 0 1px 20px; background: #bdeee1; border-bottom: 1px solid #0c5a49; color: #0d4034; font-size: 14px; letter-spacing: -.25px; }
.apple { margin-right: 20px; }
.menus { display: grid; grid-template-columns: 73px 41px 43px 50px 65px 90px 63px 70px 50px; white-space: nowrap; -webkit-text-stroke: .2px #0d4034; }
.menus b { font-weight: 700; letter-spacing: -.15px; -webkit-text-stroke: 0; }
.status { flex: 1; display: flex; align-items: center; white-space: nowrap; margin-left: 346px; -webkit-text-stroke: .2px #0d4034; }
.status svg:nth-of-type(2) { margin-left: 17px; }
.status svg:nth-of-type(3) { margin-left: 14px; }
.status svg:nth-of-type(4) { margin-left: 13px; }
.percent { width: 29px; margin-left: 13px; font-size: 12px; letter-spacing: -.3px; }
.clock { width: 102px; margin-left: 20px; }
.user { width: 88px; letter-spacing: -.05px; }
.status svg:nth-of-type(7) { margin-left: 17px; }
.status svg:nth-of-type(8) { margin-left: 12px; }

.window { height: 812px; flex: none; display: flex; flex-direction: column; border-radius: 5px 5px 6px 6px; overflow: hidden; background: #d4dcd9; }
.tabstrip { height: 37px; flex: none; display: flex; align-items: flex-end; border-bottom: 1px solid #929494; background: linear-gradient(#cfd9d6, #d7dbd9); }
.lights { display: flex; gap: 8px; width: 72px; padding-left: 12px; align-self: flex-start; margin-top: 13px; }
.lights i { width: 12px; height: 12px; border-radius: 50%; }
.red { background: #fc3b47; }
.amber { background: #fdb90b; }
.green { background: #04cf3c; }
.tabs { display: flex; height: 29px; margin-bottom: -1px; }
.tab { position: relative; width: 71.68px; height: 29px; display: flex; align-items: center; padding-left: 16px; }
.tab > * { position: relative; }
.tab .shape { position: absolute; left: 0; top: 0; width: 86px; height: 29px; }
.fav { width: 16px; height: 16px; }
.tab span { width: 24px; margin-left: 6px; white-space: nowrap; font-size: 12px; letter-spacing: -.3px; color: #111; -webkit-mask-image: linear-gradient(90deg, #000 14px, transparent 21px); mask-image: linear-gradient(90deg, #000 14px, transparent 21px); }
.tab .x { width: 10px; height: 10px; margin-left: -1px; }
.tab:nth-child(1) span, .tab:nth-child(3) span, .tab:nth-child(4) span, .tab:nth-child(14) span { -webkit-mask-image: none; mask-image: none; }
.newtab { margin: 0 0 4px 11px; }
.profile { margin: 0 0 9px 8px; }

.toolbar { height: 37px; flex: none; display: flex; align-items: center; padding-left: 10px; background: #f2f2f2; border-bottom: 1px solid #cfcfcf; }
.toolbar > svg { margin-right: 12px; }
.toolbar > svg:nth-child(3) { margin-right: 10px; }
.omnibox { width: 1172px; height: 28px; display: flex; align-items: center; padding-left: 9px; border: 1px solid #b2b2b2; border-radius: 3px; background: #fff; font-size: 14px; white-space: nowrap; }
.secure { width: 50px; margin-left: 8px; padding-bottom: 1px; color: #0b8043; letter-spacing: -.25px; }
.bar { width: 1px; height: 16px; margin-left: 1px; background: #aaa; }
.url { width: 1037px; margin-left: 7px; padding-bottom: 1px; color: #7b7b7b; letter-spacing: -.11px; }
.url em { font-style: normal; color: #0b8043; }
.url b { font-weight: 400; color: #000; }
.lens { margin-right: 13px; }
.extensions { display: flex; align-items: center; gap: 12px; margin-left: 10px; }
.dots { margin-left: 6px; }

.viewport { flex: 1; min-height: 0; display: flex; }
.page { width: 1425px; position: relative; display: flex; justify-content: center; background: linear-gradient(#7500b7 53px, #efe3f5 53px); }
.page::after { content: ""; position: absolute; left: 0; right: 0; bottom: 0; height: 45px; background: linear-gradient(transparent, rgba(30, 20, 50, .08)); }
.feedback { position: absolute; left: 11px; bottom: 15px; }
.card { width: 512px; height: 738px; overflow: hidden; padding: 7px 26.500px 0 27.500px; background: #fff; box-shadow: 0 1px 3px rgba(0, 0, 0, .35); font-family: Roboto, sans-serif; }
h1 { margin: 0; font-size: 27.200px; line-height: 36px; font-weight: 400; color: #212121; white-space: nowrap; }
.required { margin: 18px 0 29px; font-size: 10.400px; line-height: 14px; color: #db1f1f; }
h2 { margin: 0; font-size: 16px; line-height: 21px; font-weight: 400; color: #000; white-space: nowrap; }
.question { height: 146px; }
.numbers, .radios { display: grid; grid-template-columns: repeat(5, 1fr); width: 339px; margin-left: 59px; justify-items: center; align-items: center; }
.numbers { height: 38px; font-size: 12.500px; color: #212121; }
.radios { height: 39px; background: #fafafa; }
.radios i { width: 16px; height: 16px; border: 2px solid #737373; border-radius: 50%; }
.radios .on { border-color: #7500b7; background: radial-gradient(circle, #7500b7 3.700px, transparent 4.300px); }
.star { color: #db1f1f; }
.answer { width: 457px; height: 58px; margin: 11px 0 45px; border-bottom: 1px solid #dcdcdc; font-size: 12.800px; line-height: 19px; color: #000; white-space: nowrap; }
.answer u { text-decoration: underline dotted #ed3333 2px; text-underline-offset: 1px; text-decoration-skip-ink: none; }
.submit { display: block; width: 70px; height: 29px; padding: 0; border: 0; border-radius: 2px; background: #437af3; color: #fff; font: 700 11.200px/26px Roboto, sans-serif; }
.scrollbar { width: 15px; padding: 118px 0 0 3px; border-left: 1px solid #e8e8e8; background: #fafafa; }
.thumb { width: 8px; height: 500px; border-radius: 4px; background: #c1c1c1; }

.desktop { height: 65px; flex: none; display: flex; position: relative; background: linear-gradient(90deg, rgba(255, 255, 255, .5), transparent 50px), linear-gradient(#7d7d7d, #9b9b9b 5px, #f5f5f5 60px); }
.dock { width: 1359px; margin: 2px 0 0 41px; display: flex; padding-left: 3.500px; border: 1px solid #d9d8db; border-bottom: 0; border-radius: 5px 5px 0 0; background: linear-gradient(#d0cfd2, #e5e3e7 30px, #e9e7eb); box-shadow: 0 -2px 0 #6f6f72; }
.app { position: relative; width: 51.050px; height: 63px; margin-top: -1px; flex: none; }
.app > svg, .minimized svg { width: 51px; height: 63px; }
.app:first-child { margin-left: -1px; }
.run::after { content: ""; position: absolute; left: 23.500px; top: 57px; width: 4px; height: 4px; border-radius: 50%; background: #626264; }
.badge { position: absolute; left: 33px; top: 6px; width: 18px; height: 18px; border-radius: 50%; background: #f81d22; color: #fff; font-size: 10px; line-height: 18px; text-align: center; }
.separator { width: 1px; height: 47px; margin: 7px 12px 0 12px; background: #aeadb0; }
.minimized { display: flex; margin-top: -1px; }
.wallpaper { position: absolute; right: 0; top: 0; width: 8px; height: 65px; background: linear-gradient(160deg, #092743, #17486f 30%, #0a3157 60%, #174d77); }
```
